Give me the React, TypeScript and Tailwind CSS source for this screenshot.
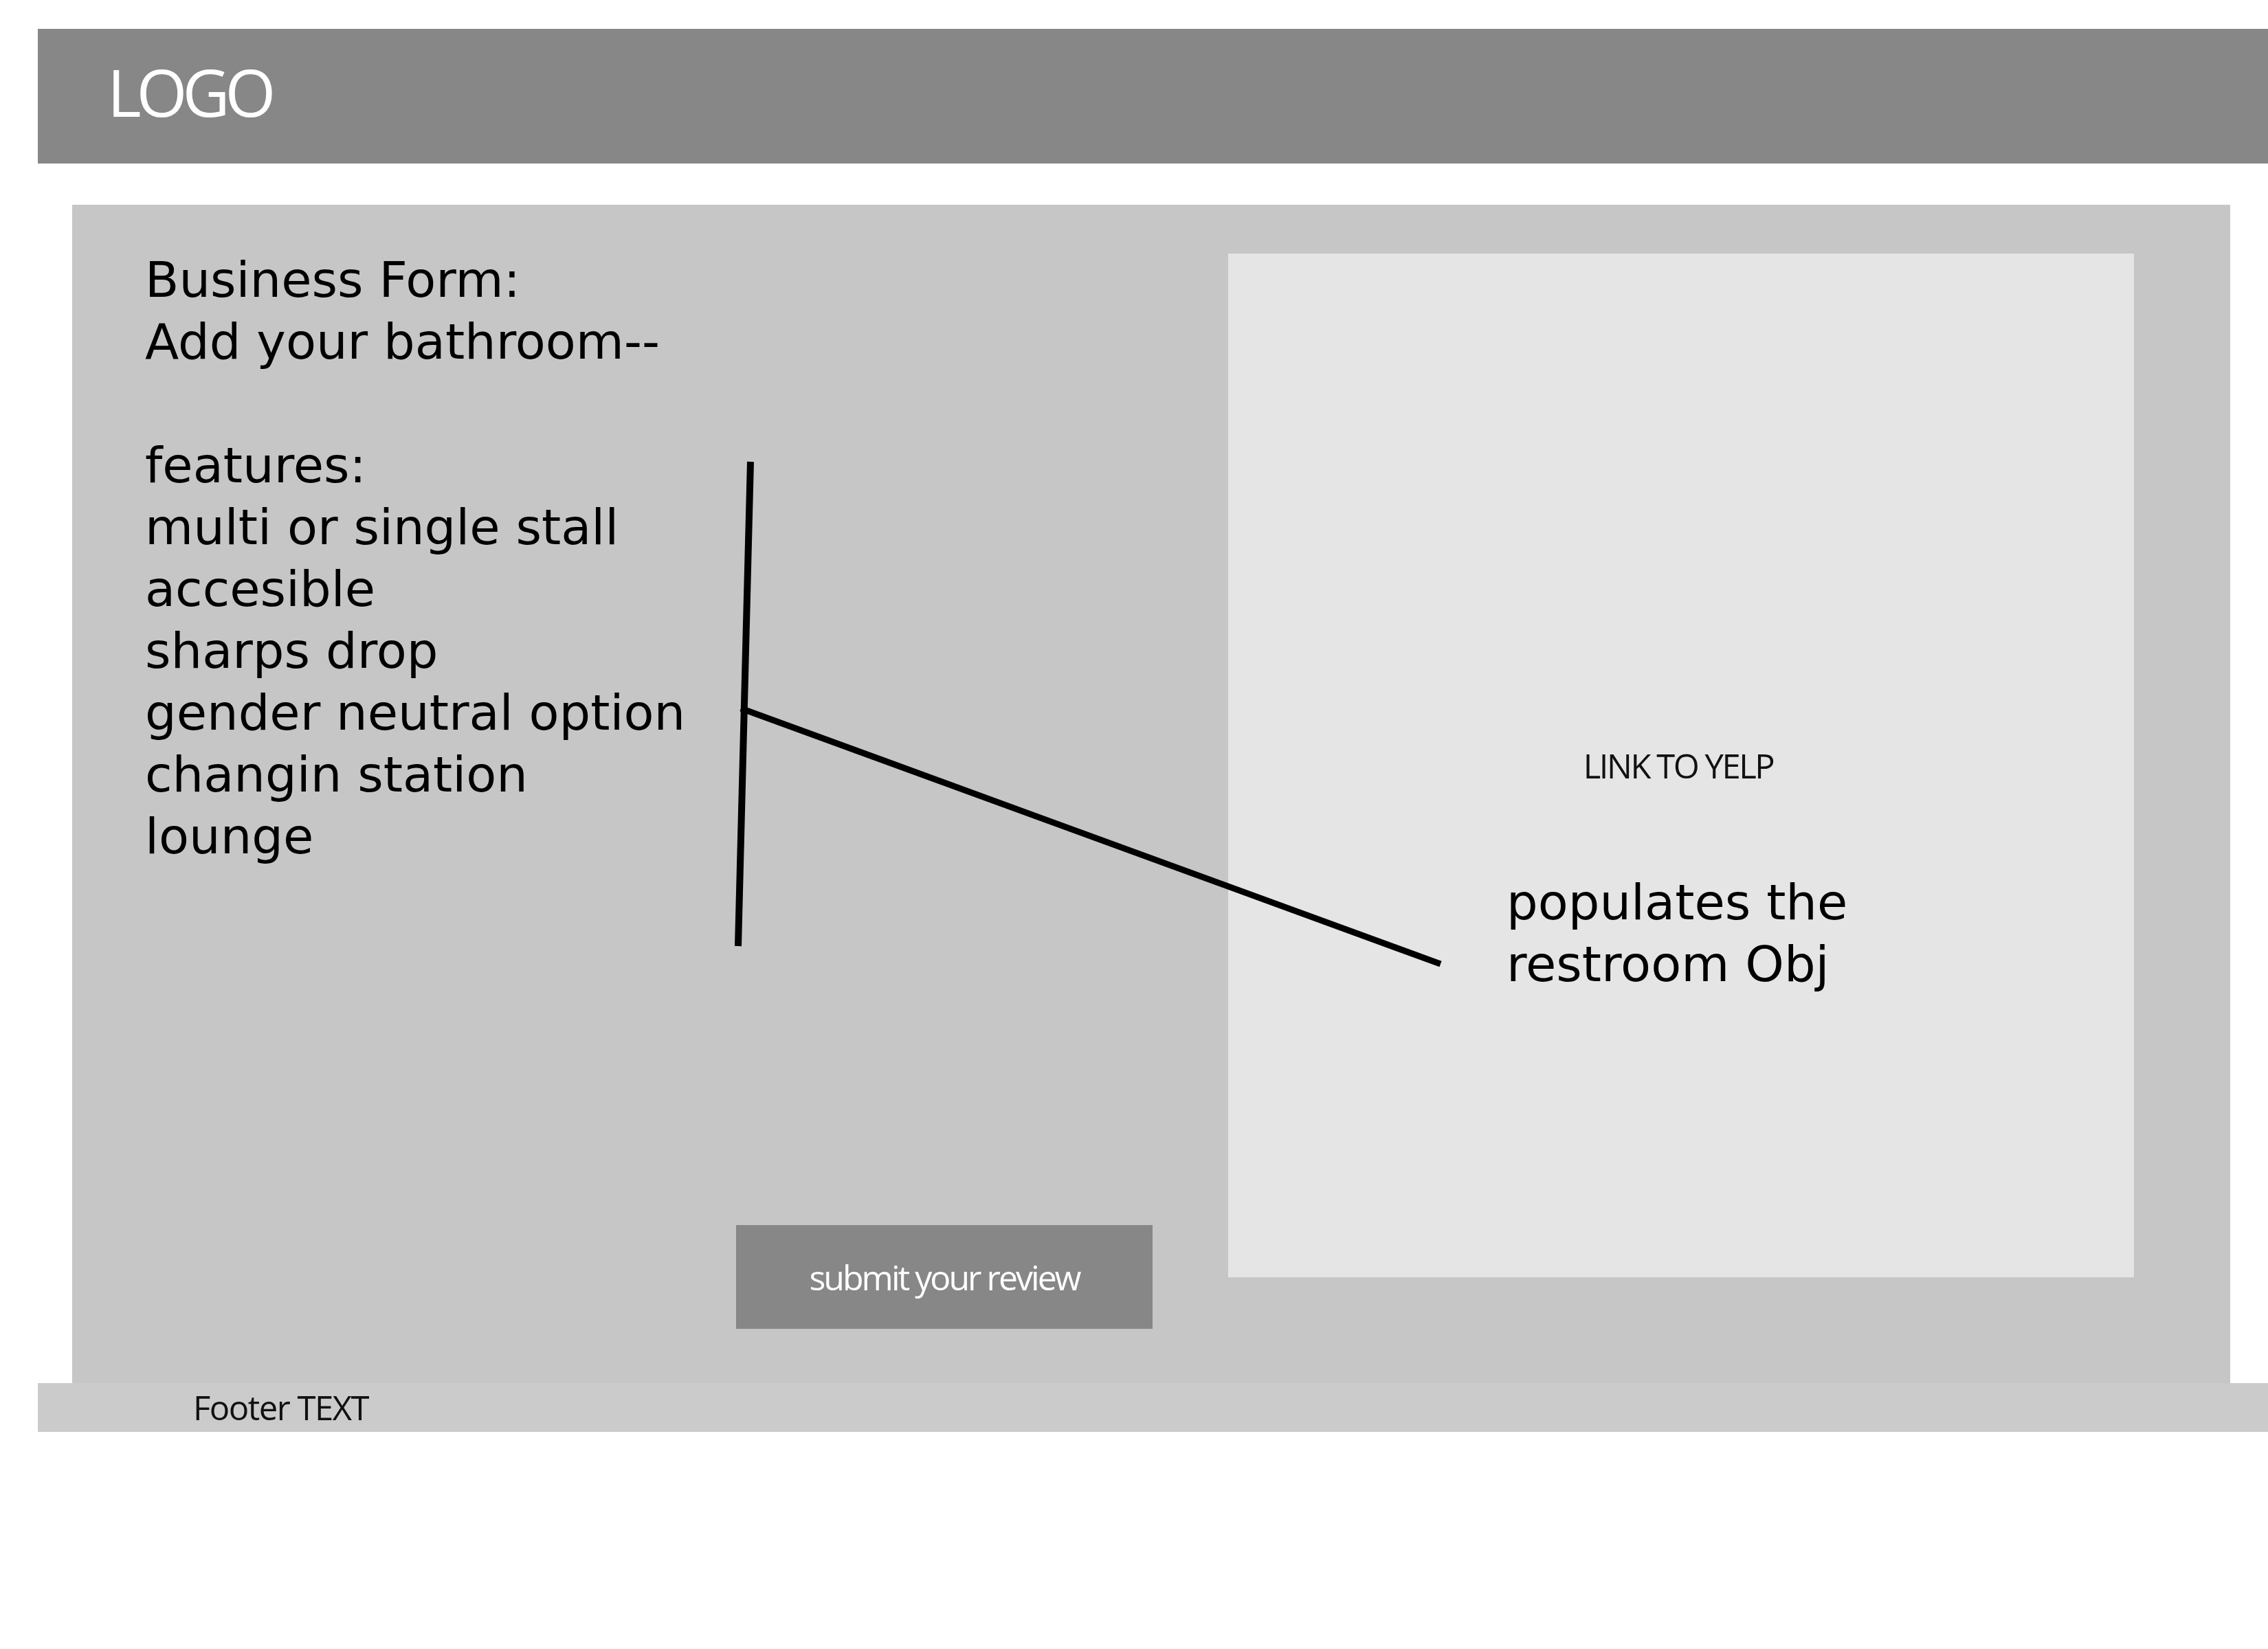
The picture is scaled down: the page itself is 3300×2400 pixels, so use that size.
const features = [
  "multi or single stall",
  "accesible",
  "sharps drop",
  "gender neutral option",
  "changin station",
  "lounge",
];

export default function App() {
  return (
    <div className="relative w-[3300px] h-[2400px] bg-white pt-[42px] font-['Open_Sans',sans-serif]">
      {/* Header */}
      <header className="ml-[55px] h-[196px] bg-[#878787] pl-[101px] pt-[44px]">
        <span className="text-[95px] leading-[95px] text-white tracking-[-7px]">LOGO</span>
      </header>

      {/* Main panel */}
      <main className="ml-[105px] mt-[60px] w-[3140px] h-[1715px] bg-[#c6c6c6] flex items-stretch pl-[106px] pt-[64px]">
        <div className="flex-1 flex flex-col pb-[79px] font-['DejaVu_Sans',sans-serif] text-[72px] leading-[90px] text-black">
          <div>Business Form:</div>
          <div>Add your bathroom--</div>
          <div className="h-[90px]" />
          <div>features:</div>
          {features.map((f) => (
            <div key={f}>{f}</div>
          ))}
          <button className="mt-auto ml-[860px] w-[606px] h-[151px] bg-[#878787] flex items-center justify-center font-['Open_Sans',sans-serif] text-[50px] leading-none text-white tracking-[-3px]">
            submit your review
          </button>
        </div>

        {/* Yelp box */}
        <section className="shrink-0 w-[1318px] h-[1490px] mt-[7px] mr-[140px] bg-[#e5e5e5] flex flex-col pt-[712px]">
          <div className="text-center text-[49px] leading-[66px] text-[#111] tracking-[-2.5px] pr-[8px]">LINK TO YELP</div>
          <div className="mt-[121px] pl-[405px] font-['DejaVu_Sans',sans-serif] text-[72px] leading-[90px] text-black">
            <div>populates the</div>
            <div>restroom Obj</div>
          </div>
        </section>
      </main>

      {/* Footer */}
      <footer className="ml-[55px] h-[71px] bg-[#cbcbcb] pl-[226px] text-[49px] leading-[71px] text-[#111] tracking-[-1.5px]">
        Footer TEXT
      </footer>

      {/* annotation lines drawn over the mockup */}
      <svg className="absolute left-0 top-0 pointer-events-none" width="3300" height="2400">
        <line x1="1092" y1="672" x2="1074" y2="1377" stroke="#000" strokeWidth="10" />
        <line x1="1078" y1="1031" x2="2096" y2="1403" stroke="#000" strokeWidth="9" />
      </svg>
    </div>
  );
}
